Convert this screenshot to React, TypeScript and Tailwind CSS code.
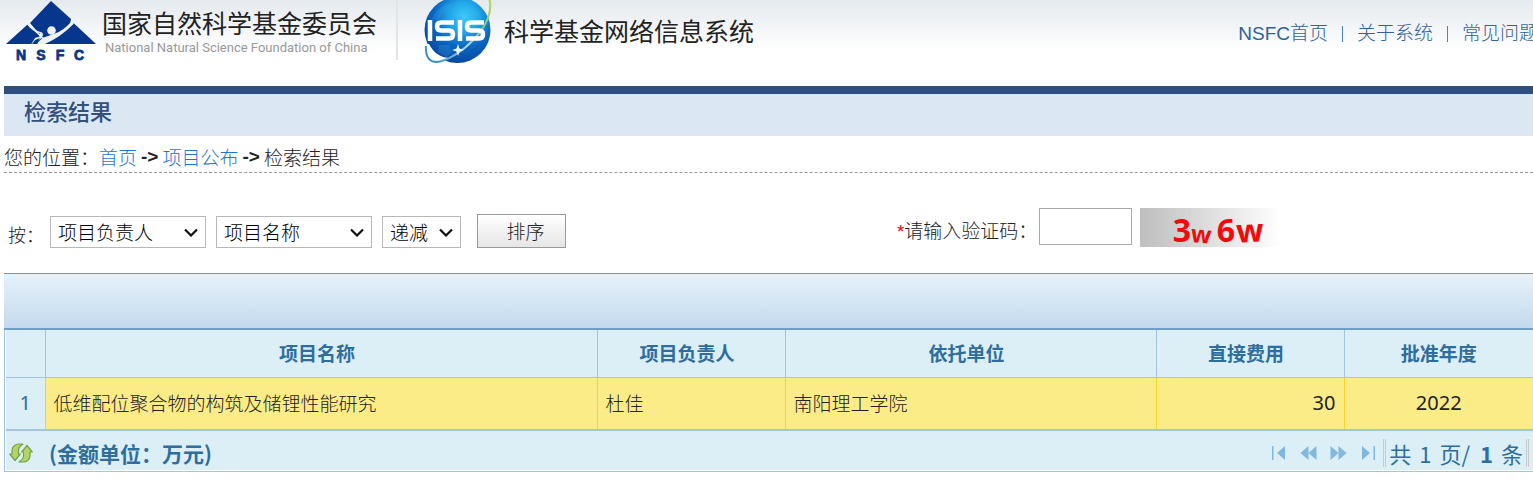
import type { ReactNode } from "react";

const columns = [
  { title: "", width: "w-[39px]" },
  { title: "项目名称", width: "" },
  { title: "项目负责人", width: "w-[188px]" },
  { title: "依托单位", width: "w-[371px]" },
  { title: "直接费用", width: "w-[188px]" },
  { title: "批准年度", width: "w-[189px]" },
];

function NsfcLogo() {
  return (
    <svg width="90" height="62" viewBox="0 0 90 62" role="img" aria-label="NSFC" className="shrink-0">
      <g fill="#06378c">
        <path d="M45 1 L65 19 L64 24 L46 40 L36 37 L24 23 Z" />
        <path d="M21.500 24.500 L42 44 H0 Z" />
        <path d="M67.500 23 L90 44 H38 Z" />
      </g>
      <g fill="#eff2f5">
        <circle cx="45.500" cy="30.500" r="4.300" />
        <path d="M65 22 Q57 31 49 33.500 L42 36 Q34 38 31 44.500 L38 44.500 Q55 37 68 23.500 Z" />
        <path d="M22 22.500 Q28 31 36 32.500 L37 34 Q27 32.500 21 24.500 Z" />
        <circle cx="35" cy="35" r="2" />
        <path d="M35 36 L36 38 L31 41 L27 44.500 H25 L29 38 Z" />
      </g>
      <path d="M29 40 L34 38 L30 44 H26 Z" fill="#06378c" />
      <g fill="#06378c" stroke="#06378c" strokeWidth="0.800" fontFamily="Liberation Sans, sans-serif" fontWeight="700" fontSize="14" textAnchor="middle">
        <text x="15" y="60">N</text>
        <text x="35" y="60">S</text>
        <text x="54" y="60">F</text>
        <text x="73" y="60">C</text>
      </g>
    </svg>
  );
}

function IsisLogo() {
  return (
    <svg width="72" height="66" viewBox="0 0 72 66" role="img" aria-label="ISIS" className="shrink-0">
      <defs>
        <radialGradient id="globe" cx="0.6" cy="0.3" r="0.7">
          <stop offset="0" stopColor="#3ccbf8" />
          <stop offset="0.3" stopColor="#22aaec" />
          <stop offset="0.65" stopColor="#0a66c2" />
          <stop offset="1" stopColor="#0848a0" />
        </radialGradient>
        <linearGradient id="orbit" x1="0" y1="1" x2="1" y2="0">
          <stop offset="0" stopColor="#1f7fc4" />
          <stop offset="0.45" stopColor="#b5dcf2" />
          <stop offset="0.7" stopColor="#8fc97a" />
          <stop offset="1" stopColor="#b4d957" />
        </linearGradient>
      </defs>
      <circle cx="35.500" cy="30" r="33" fill="url(#globe)" />
      <path d="M14 12 L22 5 L30 3 L27 11 L20 14 L16 20 L10 19 Z M46 7 L56 12 L60 19 L50 18 L42 13 Z M17 45 L27 45 L30 53 L24 57 L16 52 Z" fill="#45b5ee" opacity="0.2" />
      <path d="M5 44 Q3 61 14 61.500 Q22 61 29 58 Q14 58 7 44 Z" fill="#fff" />
      <path d="M4 46 Q3 62 15 62 C35 60 76 25 67 -2" fill="none" stroke="url(#orbit)" strokeWidth="2" />
      <g fill="none" stroke="#fff" strokeWidth="4.500" strokeLinejoin="round">
        <path d="M8 20 V41" />
        <path d="M32 22.500 H19 Q15 22.500 15 26.500 Q15 30.500 19 30.500 H27 Q31 30.500 31 34.500 Q31 38.500 27 38.500 H14" />
        <path d="M38 20 V41" />
        <path d="M62 22.500 H49 Q45 22.500 45 26.500 Q45 30.500 49 30.500 H57 Q61 30.500 61 34.500 Q61 38.500 57 38.500 H44" />
      </g>
      <path d="M36 44 L37.500 48.500 L42 50 L37.500 51.500 L36 56 L34.500 51.500 L30 50 L34.500 48.500 Z" fill="#eaf8ff" />
    </svg>
  );
}

function Select({ label, value, width }: { label: string; value: string; width: string }) {
  return (
    <span className="relative inline-flex">
      <select
        aria-label={label}
        defaultValue={value}
        className={`${width} h-8 appearance-none border border-[#b8b8b8] bg-white pl-[7px] text-[19px] leading-6 text-black`}
      >
        <option>{value}</option>
      </select>
      <svg className="pointer-events-none absolute top-3 right-2" width="14" height="9" viewBox="0 0 14 9" aria-hidden="true">
        <path d="M1 1.500 L7 7.500 L13 1.500" fill="none" stroke="#111" strokeWidth="2.200" />
      </svg>
    </span>
  );
}

function Captcha() {
  return (
    <svg width="141" height="39" viewBox="0 0 141 39" role="img" aria-label="验证码">
      <defs>
        <linearGradient id="fade">
          <stop offset="0" stopColor="#bebebe" />
          <stop offset="1" stopColor="#ffffff" />
        </linearGradient>
      </defs>
      <rect width="141" height="39" fill="url(#fade)" />
      <g fill="#f00a0a" fontFamily="Noto Sans, sans-serif" fontWeight="700" textAnchor="middle">
        <text x="42" y="34" fontSize="32">3</text>
        <text x="61" y="35" fontSize="24" transform="rotate(5 61 28)">w</text>
        <text x="86" y="34" fontSize="32">6</text>
        <text x="110" y="34" fontSize="32" transform="rotate(-3 110 28)">w</text>
      </g>
    </svg>
  );
}

function PagerButton({ label, children }: { label: string; children: ReactNode }) {
  return (
    <button type="button" aria-label={label} className="flex h-6 w-[30px] items-center justify-center">
      <svg width="17" height="16" viewBox="0 0 17 16" fill="#7fb9de" aria-hidden="true">
        {children}
      </svg>
    </button>
  );
}

function RefreshIcon() {
  return (
    <svg width="24" height="20" viewBox="0 0 24 20" aria-hidden="true">
      <g fill="#b5d468" stroke="#74a24c" strokeWidth="1.200" strokeLinejoin="round">
        <path d="M14 1 H9 Q3 2 3 8 V11 H0.700 L6 17.500 L11.300 11 H9.500 V6.500 Q10 3.500 14 1 Z" />
        <path d="M10 19 H15 Q21 18 21 12 V9 H23.300 L18 2.500 L12.700 9 H14.500 V13.500 Q14 16.500 10 19 Z" />
      </g>
    </svg>
  );
}

export default function App() {
  return (
    <div className="overflow-x-hidden bg-white pb-3 font-['Noto_Sans_CJK_SC',sans-serif] text-[19px] leading-7 text-[#333]">
      <header className="flex h-[86px] items-start overflow-hidden bg-linear-to-b from-[#e5eaee] to-white to-60%">
        <div className="flex h-[60px] w-[398px] shrink-0 items-start border-r-2 border-[#e2e4e6] pl-1.5">
          <NsfcLogo />
          <div className="pt-1.5 pl-1.5 whitespace-nowrap">
            <p className="text-[25px] leading-8 text-[#222]">国家自然科学基金委员会</p>
            <p className="pl-[3px] font-['Roboto'] text-[13px] leading-5 text-[#999]">National Natural Science Foundation of China</p>
          </div>
        </div>
        <div className="flex shrink-0 items-start pl-6">
          <IsisLogo />
          <p className="pt-3.5 pl-2.5 text-[25px] leading-8 text-[#222]">科学基金网络信息系统</p>
        </div>
        <nav className="-mr-[5px] ml-auto flex shrink-0 items-center gap-3.5 pt-5 font-['Liberation_Sans','Noto_Sans_CJK_SC',sans-serif] font-light text-[#2f6299]">
          <a href="#home">NSFC首页</a>
          <span className="h-4 w-px bg-[#4a86bd]" />
          <a href="#about">关于系统</a>
          <span className="h-4 w-px bg-[#4a86bd]" />
          <a href="#faq">常见问题</a>
        </nav>
      </header>

      <main className="pl-1">
        <div className="h-[50px] border-t-8 border-[#2f507e] bg-[#dbe8f4] pl-5">
          <h1 className="text-[22px] leading-8 font-medium text-[#33507f]">检索结果</h1>
        </div>

        <nav className="flex h-[37px] items-center gap-1 border-b border-dashed border-[#999] pt-1.5 leading-7 font-light text-[#222]">
          <span className="-mr-1">您的位置：</span>
          <a href="#home" className="text-[#1f74d6]">首页</a>
          <span className="font-['Liberation_Sans'] font-bold">-&gt;</span>
          <a href="#projects" className="text-[#1f74d6]">项目公布</a>
          <span className="font-['Liberation_Sans'] font-bold">-&gt;</span>
          <span>检索结果</span>
        </nav>

        <form className="grid h-[100px] grid-cols-[58.400%_1fr] items-start pt-[35px] font-light text-[#222]">
          <div className="flex items-end pt-1.5 pl-1">
            <span className="w-[42px] text-lg leading-7">按：</span>
            <div className="flex items-end gap-2.5">
              <Select label="排序字段" value="项目负责人" width="w-[156px]" />
              <Select label="第二排序字段" value="项目名称" width="w-[156px]" />
              <Select label="排序方向" value="递减" width="w-[79px]" />
            </div>
            <button type="button" className="ml-4 h-[34px] w-[89px] border border-[#999] bg-linear-to-b from-white to-[#e6e6e6] pl-2 leading-7 text-[#222]">
              排序
            </button>
          </div>
          <div className="flex items-start">
            <label htmlFor="code" className="pt-2 pr-0.5">
              <span className="font-['Liberation_Sans'] text-red-600">*</span>请输入验证码：
            </label>
            <input id="code" className="h-[37px] w-[93px] border border-[#aaa] bg-white px-2" />
            <span className="ml-2">
              <Captcha />
            </span>
          </div>
        </form>

        <section>
          <div className="h-[57px] border-t border-b-2 border-t-[#5a9bd0] border-b-[#6f9fca] bg-linear-to-b from-[#e6f2fb] to-[#c3d9ec]" />
          <div className="border-b border-l border-[#a3c5e0] pb-px pl-px">
            <table className="w-full table-fixed border-collapse bg-[#dceef6]">
              <thead>
                <tr className="h-[47px] border-b border-[#a3c5e0] leading-6 text-[#2e6e9e]">
                  {columns.map((column) => (
                    <th key={column.title} className={`${column.width} border-r border-[#a3c5e0] pr-2 font-bold last:border-r-0 last:pr-0`}>
                      {column.title}
                    </th>
                  ))}
                </tr>
              </thead>
              <tbody>
                <tr className="h-[53px] border-b-2 border-[#a3c5e0] bg-[#fbec88] text-[#222]">
                  <td className="border-r border-[#fad42e] bg-[#dceef6] text-center font-['Noto_Sans'] text-xl text-[#2e6e9e]">1</td>
                  <td className="border-r border-[#fad42e] px-2 font-light">低维配位聚合物的构筑及储锂性能研究</td>
                  <td className="border-r border-[#fad42e] px-2 font-light">杜佳</td>
                  <td className="border-r border-[#fad42e] px-2 font-light">南阳理工学院</td>
                  <td className="border-r border-[#fad42e] px-2 text-right font-['Noto_Sans'] text-xl">30</td>
                  <td className="px-2 text-center font-['Noto_Sans'] text-xl">2022</td>
                </tr>
              </tbody>
            </table>
            <div className="flex h-[39px] items-center justify-between bg-[#dceef6] pt-1 pr-1 pl-[3px] text-[#2e6e9e]">
              <div className="flex items-center gap-4">
                <button type="button" aria-label="刷新">
                  <RefreshIcon />
                </button>
                <span className="text-[21px] font-bold">(金额单位：万元)</span>
              </div>
              <div className="flex items-center">
                <PagerButton label="第一页">
                  <path d="M2 1 H3.500 V15 H2 Z M15 1 V15 L7 8 Z" />
                </PagerButton>
                <PagerButton label="上一页">
                  <path d="M8.500 1 V15 L0.500 8 Z M16.500 1 V15 L8.500 8 Z" />
                </PagerButton>
                <PagerButton label="下一页">
                  <path d="M0.500 1 V15 L8.500 8 Z M8.500 1 V15 L16.500 8 Z" />
                </PagerButton>
                <PagerButton label="最后一页">
                  <path d="M2 1 V15 L10 8 Z M13.500 1 H15 V15 H13.500 Z" />
                </PagerButton>
                <p className="flex gap-2 border-x-3 border-double border-[#c4ccd0] px-[3px] text-[22px] leading-7 whitespace-nowrap">
                  <span>共</span>
                  <span>1</span>
                  <span>页/</span>
                  <b className="pl-0.5">1</b>
                  <span>条</span>
                </p>
              </div>
            </div>
          </div>
        </section>
      </main>
    </div>
  );
}
